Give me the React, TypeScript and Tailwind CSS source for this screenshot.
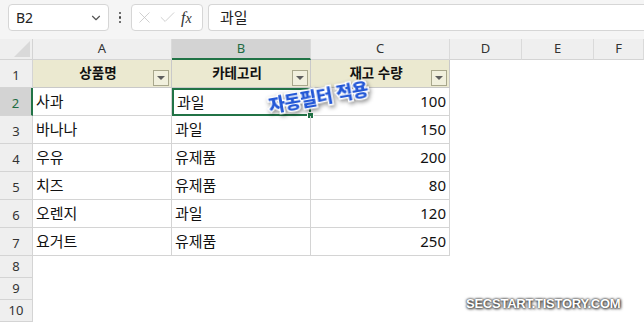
import { ChevronDown, X, Check } from "lucide-react";

const cols = ["A", "B", "C", "D", "E", "F"];

const rows = [
  { name: "사과", cat: "과일", qty: 100 },
  { name: "바나나", cat: "과일", qty: 150 },
  { name: "우유", cat: "유제품", qty: 200 },
  { name: "치즈", cat: "유제품", qty: 80 },
  { name: "오렌지", cat: "과일", qty: 120 },
  { name: "요거트", cat: "유제품", qty: 250 },
];

const font = "font-['Noto_Sans','Noto_Sans_CJK_KR',sans-serif]";

function FilterButton() {
  return (
    <div className="absolute right-[2px] top-[10px] w-[16px] h-[16px] border border-[#a8a78c] bg-[#f1f0dd] flex items-center justify-center">
      <div className="w-0 h-0 border-l-[4px] border-r-[4px] border-t-[4px] border-l-transparent border-r-transparent border-t-[#5f5f5f]" />
    </div>
  );
}

function HeaderCell({ label }: { label: string }) {
  return (
    <div className="relative bg-[#ebe9d0] border-b border-r border-[#c9c9c9] flex items-center justify-center font-bold text-[13.5px] text-[#111] pr-2">
      {label}
      <FilterButton />
    </div>
  );
}

export default function App() {
  return (
    <div className={`w-[644px] h-[325px] overflow-hidden bg-white ${font} relative`}>
      {/* Formula bar */}
      <div className="h-[39px] bg-[#f5f5f5] flex items-start pt-[4px] pl-[8px]">
        <div className="w-[101px] h-[27px] bg-white border border-[#d6d6d6] rounded-[4px] flex items-center justify-between pl-[7px] pr-[5px]">
          <span className="text-[14px] text-[#222]">B2</span>
          <ChevronDown className="w-[14px] h-[14px] text-[#555]" strokeWidth={2} />
        </div>
        <div className="w-[22px] h-[27px] flex flex-col items-center justify-center gap-[2px]">
          <div className="w-[2.5px] h-[2.5px] rounded-full bg-[#444]" />
          <div className="w-[2.5px] h-[2.5px] rounded-full bg-[#444]" />
          <div className="w-[2.5px] h-[2.5px] rounded-full bg-[#444]" />
        </div>
        <div className="w-[72px] h-[27px] bg-white border border-[#d6d6d6] rounded-[4px] flex items-center pl-[3px] gap-[4px]">
          <X className="w-[19px] h-[19px] text-[#c4c4c4]" strokeWidth={1} />
          <Check className="w-[19px] h-[19px] text-[#c4c4c4]" strokeWidth={1} />
          <span className="font-['Liberation_Serif',serif] italic text-[16px] text-[#333] leading-none">
            f<span className="text-[14px]">x</span>
          </span>
        </div>
        <div className="ml-[5px] flex-1 h-[27px] bg-white border border-[#d6d6d6] border-r-0 rounded-l-[4px] flex items-center pl-[11px]">
          <span className="text-[15px] text-[#222]">과일</span>
        </div>
      </div>

      {/* Grid */}
      <div className="grid grid-cols-[33px_139px_139px_139px_72px_72px_1fr] grid-rows-[21px_repeat(7,28px)_repeat(3,22px)] text-[15px] text-[#111]">
        {/* corner */}
        <div className="relative bg-[#efefef] border-r border-b border-[#d4d4d4]">
          <svg className="absolute right-[2px] bottom-[2px]" width="16" height="16">
            <polygon points="16,0 16,16 0,16" fill="#d9d9d9" />
          </svg>
        </div>
        {cols.map((c) => (
          <div
            key={c}
            className={`flex items-center justify-center text-[13px] border-r border-r-[#dadada] ${
              c === "B"
                ? "bg-[#d3d3d3] text-[#1e6b42] border-b-2 border-b-[#217346]"
                : "bg-[#efefef] text-[#333] border-b border-b-[#d4d4d4]"
            }`}
          >
            {c}
          </div>
        ))}

        {/* row 1: headers */}
        <div className="bg-[#efefef] border-r border-b border-[#d4d4d4] flex items-end justify-center pb-[2px] text-[13px] text-[#333]">
          1
        </div>
        <HeaderCell label="상품명" />
        <HeaderCell label="카테고리" />
        <HeaderCell label="재고 수량" />
        <div />
        <div />
        <div />

        {rows.map((r, i) => {
          const n = i + 2;
          const sel = n === 2;
          return [
            <div
              key={`h${n}`}
              className={`flex items-end justify-center pb-[2px] text-[13px] border-b border-[#d4d4d4] ${
                sel
                  ? "bg-[#d3d3d3] text-[#1e6b42] border-r-2 border-r-[#217346]"
                  : "bg-[#efefef] text-[#333] border-r border-r-[#d4d4d4]"
              }`}
            >
              {n}
            </div>,
            <div key={`a${n}`} className="border-r border-b border-[#d4d4d4] flex items-center pl-[3px]">
              {r.name}
            </div>,
            <div
              key={`b${n}`}
              className={`relative flex items-center pl-[3px] ${
                sel ? "border-2 border-[#217346]" : "border-r border-b border-[#d4d4d4]"
              }`}
            >
              {r.cat}
              {sel && (
                <div className="absolute -right-[5px] -bottom-[5px] w-[7px] h-[7px] bg-[#217346] border border-white" />
              )}
            </div>,
            <div key={`c${n}`} className="border-r border-b border-[#d4d4d4] flex items-center justify-end pr-[3px]">
              {r.qty}
            </div>,
            <div key={`d${n}`} />,
            <div key={`e${n}`} />,
            <div key={`f${n}`} />,
          ];
        })}

        {[8, 9, 10].map((n) => [
          <div
            key={`h${n}`}
            className="bg-[#efefef] border-r border-b border-[#d4d4d4] flex items-center justify-center text-[13px] text-[#333]"
          >
            {n}
          </div>,
          <div key={`x${n}`} className="col-span-6" />,
        ])}
      </div>

      {/* Overlay annotation */}
      <div className="absolute left-[268px] top-[84px] -rotate-[10deg] text-[18px] font-extrabold text-[#2458d6] tracking-[-0.5px] [paint-order:stroke_fill] [-webkit-text-stroke:3px_white] [filter:drop-shadow(1px_2px_2px_rgba(0,0,0,0.45))]">
        자동필터 적용
      </div>

      {/* Watermark */}
      <div className="absolute left-[466px] top-[294px] font-['Liberation_Sans',sans-serif] font-bold text-[13px] tracking-[-0.25px] text-white [text-shadow:0_0_2px_#333,0_0_3px_#555,1px_1px_3px_#444]">
        SECSTART.TISTORY.COM
      </div>
    </div>
  );
}
